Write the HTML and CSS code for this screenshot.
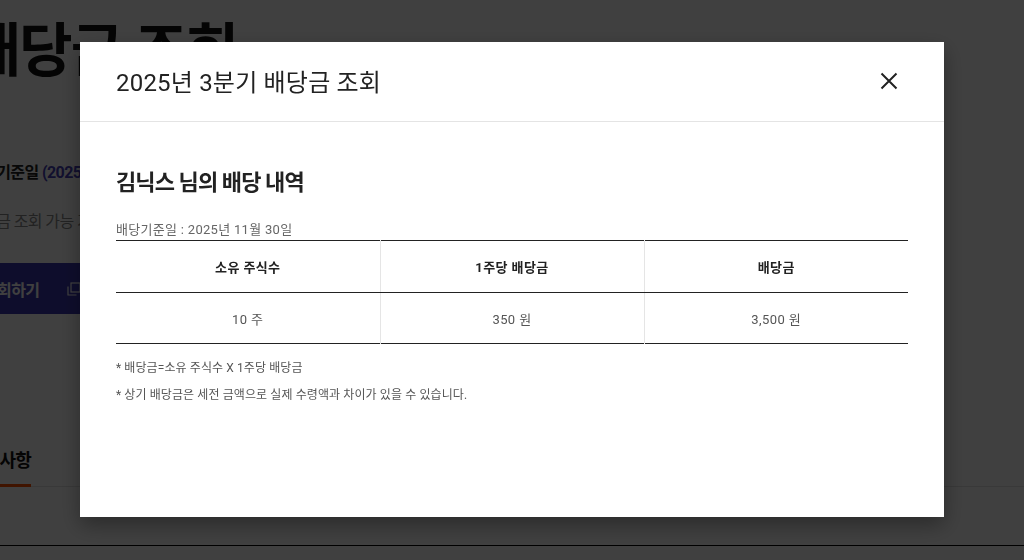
FILE: index.html
```html
<!DOCTYPE html>
<html lang="ko">
<head>
<meta charset="utf-8">
<title>배당금 조회</title>
<link rel="stylesheet" href="styles.css">
</head>
<body>
<div class="page">
  <h1 class="page-title">배당금 조회</h1>
  <p class="info-line"><strong>배당기준일 <span class="accent">(2025년 11월 30일)</span></strong></p>
  <p class="info-sub">배당금 조회 가능 기간 안내</p>
  <div class="btn-row">
    <button class="btn-primary">조회하기
      <svg class="btn-icon" width="14" height="14" viewBox="0 0 14 14" fill="none" stroke="#fff" stroke-width="1.2"><path d="M1 4.5V13H9.5"/><rect x="4" y="1" width="9" height="9"/></svg>
    </button>
  </div>
  <div class="tabs">
    <div class="tab active">유의사항</div>
    <div class="tab">자주 묻는 질문</div>
  </div>
  <div class="footer-line"></div>
</div>

<div class="overlay">
  <div class="modal" role="dialog">
    <div class="modal-header">
      <h2 class="modal-title">2025년 3분기 배당금 조회</h2>
      <button class="modal-close" aria-label="닫기">
        <svg width="20" height="20" viewBox="0 0 20 20" fill="none" stroke="#222" stroke-width="2"><path d="M2.5 2.5L17.5 17.5M17.5 2.5L2.5 17.5"/></svg>
      </button>
    </div>
    <div class="modal-body">
      <h3 class="holder">김닉스 님의 배당 내역</h3>
      <p class="base-date">배당기준일 : 2025년 11월 30일</p>
      <table class="div-table">
        <thead>
          <tr><th>소유 주식수</th><th>1주당 배당금</th><th>배당금</th></tr>
        </thead>
        <tbody>
          <tr><td>10 주</td><td>350 원</td><td>3,500 원</td></tr>
        </tbody>
      </table>
      <ul class="notes">
        <li>* 배당금=소유 주식수 X 1주당 배당금</li>
        <li>* 상기 배당금은 세전 금액으로 실제 수령액과 차이가 있을 수 있습니다.</li>
      </ul>
    </div>
  </div>
</div>
</body>
</html>
```

FILE: styles.css
```css
* { box-sizing: border-box; }
html, body { margin: 0; padding: 0; }
body {
  width: 1024px;
  height: 560px;
  overflow: hidden;
  background: #fff;
  font-family: Roboto, "Noto Sans CJK KR", sans-serif;
  color: #222;
}

/* background page */
.page {
  margin-left: -32px;
  padding-top: 15px;
}
.page-title {
  margin: 0;
  font-size: 58px;
  line-height: 72px;
  font-weight: 700;
  letter-spacing: -2px;
  color: #111;
}
.info-line {
  margin: 74px 0 0;
  font-size: 16px;
  line-height: 24px;
  letter-spacing: -0.6px;
  color: #222;
}
.info-line strong { font-weight: 700; }
.accent { color: #4640b8; }
.info-sub {
  margin: 25px 0 0;
  font-size: 16px;
  line-height: 24px;
  letter-spacing: -0.6px;
  color: #888;
}
.btn-row { margin-top: 29px; }
.btn-primary {
  display: flex;
  align-items: center;
  gap: 28px;
  height: 51px;
  width: 300px;
  padding: 0 0 0 15px;
  border: 0;
  background: #3a36b0;
  color: #fff;
  font-family: inherit;
  font-size: 16px;
  font-weight: 700;
  letter-spacing: -0.6px;
}
.btn-icon { flex: none; }
.tabs {
  display: flex;
  gap: 52px;
  margin-top: 135px;
  border-bottom: 1px solid #e2e2e2;
}
.tab {
  padding: 0 0 11px;
  font-size: 18px;
  line-height: 24px;
  font-weight: 700;
  letter-spacing: -0.8px;
  color: #111;
  border-bottom: 3px solid transparent;
  margin-bottom: -1px;
}
.tab.active { border-bottom-color: #ff5200; }
.footer-line {
  margin-top: 58px;
  height: 1px;
  background: #000;
  margin-left: 32px;
}

/* overlay + modal */
.overlay {
  position: fixed;
  inset: 0;
  padding-bottom: 1px;
  background: rgba(0, 0, 0, 0.75);
  display: flex;
  align-items: center;
  justify-content: center;
}
.modal {
  width: 864px;
  height: 475px;
  background: #fff;
  box-shadow: 0 8px 20px rgba(0, 0, 0, 0.35);
}
.modal-header {
  height: 80px;
  display: flex;
  align-items: center;
  justify-content: space-between;
  padding: 0 36px 2px;
  border-bottom: 1px solid #e4e4e4;
}
.modal-title {
  margin: 0;
  font-size: 24px;
  font-weight: 400;
  letter-spacing: 0.2px;
  color: #222;
}
.modal-close {
  width: 38px;
  height: 38px;
  padding: 0;
  border: 0;
  background: none;
  display: flex;
  align-items: center;
  justify-content: center;
}
.modal-body {
  padding: 45px 36px 0;
}
.holder {
  margin: 0;
  font-size: 22px;
  line-height: 31px;
  font-weight: 700;
  letter-spacing: -0.9px;
  color: #222;
}
.base-date {
  margin: 23px 0 1px;
  font-size: 13px;
  line-height: 18px;
  color: #666;
  letter-spacing: 0.3px;
}
.div-table {
  width: 100%;
  border-collapse: collapse;
  table-layout: fixed;
  border-top: 1px solid #222;
  border-bottom: 1px solid #222;
}
.div-table th,
.div-table td {
  text-align: center;
  font-size: 13px;
  letter-spacing: 0.4px;
  border-left: 1px solid #e5e5e5;
}
.div-table th:first-child,
.div-table td:first-child { border-left: 0; }
.div-table th {
  height: 52px;
  font-weight: 700;
  color: #222;
  border-bottom: 1px solid #222;
}
.div-table td {
  height: 51px;
  font-weight: 400;
  color: #555;
}
.notes {
  list-style: none;
  margin: 16px 0 0;
  padding: 0;
}
.notes li {
  font-size: 12px;
  line-height: 17px;
  color: #555;
  letter-spacing: 0.1px;
  margin-bottom: 10px;
}
```
